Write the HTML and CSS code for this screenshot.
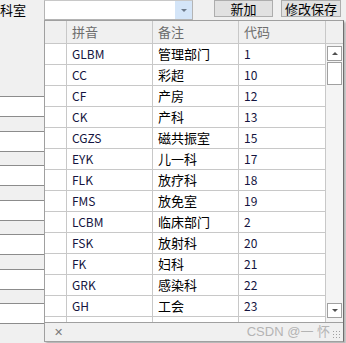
FILE: index.html
```html
<!DOCTYPE html>
<html lang="zh">
<head>
  <meta charset="UTF-8">
  <title>科室</title>
  <link rel="stylesheet" href="styles.css">
</head>
<body>

  <div class="toolbar">
    <span class="label">科室</span>
    <div class="combo">
      <span class="combo-btn"><span class="tri-down"></span></span>
    </div>
    <button class="btn btn-add">新加</button>
    <button class="btn btn-save">修改保存</button>
  </div>

  <div class="fields">
    <div class="field"></div>
    <div class="field"></div>
    <div class="field"></div>
    <div class="field"></div>
    <div class="field"></div>
    <div class="field"></div>
    <div class="field"></div>
  </div>

  <!-- dropdown grid -->
  <div class="popup">
    <div class="head">
      <div class="rh"></div>
      <div class="hc">拼音</div>
      <div class="hc">备注</div>
      <div class="hc">代码</div>
      <div class="hs"></div>
    </div>
    <div class="body">
      <div class="rows" id="rows"></div>
      <div class="scroll">
        <div class="sb-btn"><span class="tri-up"></span></div>
        <div class="thumb"></div>
        <div class="track"></div>
        <div class="sb-btn"><span class="tri-down dark"></span></div>
      </div>
    </div>
    <div class="foot">
      <span class="close">&#x2715;</span>
      <span class="mark">CSDN @一 怀</span>
      <span class="grip"></span>
    </div>
  </div>

  <script>
    const data = [
      ['GLBM', '管理部门', '1'], ['CC', '彩超', '10'], ['CF', '产房', '12'],
      ['CK', '产科', '13'], ['CGZS', '磁共振室', '15'], ['EYK', '儿一科', '17'],
      ['FLK', '放疗科', '18'], ['FMS', '放免室', '19'], ['LCBM', '临床部门', '2'],
      ['FSK', '放射科', '20'], ['FK', '妇科', '21'], ['GRK', '感染科', '22'],
      ['GH', '工会', '23'], ['', '', '']
    ];
    document.getElementById('rows').innerHTML = data.map(r =>
      `<div class="row"><div class="rh"></div><div class="c lat">${r[0]}</div><div class="c">${r[1]}</div><div class="c lat">${r[2]}</div></div>`
    ).join('');
  </script>

</body>
</html>
```

FILE: styles.css
```css
* { margin: 0; padding: 0; box-sizing: border-box; }
html, body {
  width: 346px;
  height: 343px;
  overflow: hidden;
}
body {
  font-family: "Noto Sans CJK SC", "Noto Sans", sans-serif;
  font-size: 13px;
  background: #f0f0f0;
  color: #000;
  position: relative;
}
.toolbar {
  display: flex;
  align-items: flex-start;
  height: 20px;
}
.label {
  width: 44px;
  line-height: 18px;
  padding-top: 1px;
}
.combo {
  width: 149px;
  height: 20px;
  background: white;
  border: 1px solid #b4b4b4;
  border-top-color: #c8c8c8;
  display: flex;
  justify-content: flex-end;
}
.combo-btn {
  width: 17px;
  height: 18px;
  background: #d4e5f8;
  display: flex;
  align-items: center;
  justify-content: center;
}
.tri-down {
  width: 0;
  height: 0;
  border-left: 3px solid transparent;
  border-right: 3px solid transparent;
  border-top: 3px solid #6d7a8a;
}
.tri-down.dark { border-top-color: #505050; }
.tri-up {
  width: 0;
  height: 0;
  border-left: 3px solid transparent;
  border-right: 3px solid transparent;
  border-bottom: 3px solid #505050;
}
.btn {
  height: 17px;
  background: #e1e1e1;
  border: 1px solid #adadad;
  font-family: inherit;
  font-size: 13px;
  line-height: 14px;
  color: #000;
}
.btn-add { width: 59px; margin-left: 21px; }
.btn-save { width: 60px; margin-left: 8px; }

.fields {
  margin-top: 76px;
  display: flex;
  flex-direction: column;
  gap: 13.5px;
}
.field {
  width: 60px;
  height: 21px;
  background: white;
  border-top: 1px solid #8c8c8c;
  border-bottom: 1px solid #8c8c8c;
}

.popup {
  position: absolute;
  left: 44px;
  top: 20px;
  width: 300px;
  height: 322px;
  background: white;
  border: 1px solid #a0a0a0;
  border-right-color: #6e6e6e;
  box-shadow: 2px 2px 2px rgba(0, 0, 0, 0.25);
  display: flex;
  flex-direction: column;
}
.head {
  display: flex;
  height: 23px;
  background: #f0f0f0;
  border-bottom: 1px solid #c8c8c8;
}
.rh {
  width: 22px;
  flex: none;
  border-right: 1px solid #c8c8c8;
}
.hc {
  width: 86px;
  padding-left: 5px;
  line-height: 22px;
  color: #6d6d6d;
  border-right: 1px solid #c8c8c8;
}
.hc:nth-child(4) { width: 87px; }
.hs { width: 17px; }
.body {
  display: flex;
  height: 278px;
  overflow: hidden;
}
.rows {
  width: 281px;
  overflow: hidden;
}
.row {
  display: flex;
  height: 21px;
  border-bottom: 1px solid #c8c8c8;
}
.row .rh { background: white; }
.c {
  width: 86px;
  padding-left: 5px;
  line-height: 20px;
  border-right: 1px solid #c8c8c8;
  white-space: nowrap;
}
.c:nth-child(4) { width: 87px; }
.lat {
  font-size: 12px;
  color: #141440;
}
.scroll {
  width: 17px;
  background: #f4f4f4;
  display: flex;
  flex-direction: column;
  align-items: center;
  padding: 2px 0 4px;
}
.sb-btn {
  width: 15px;
  height: 15px;
  background: white;
  border: 1px solid #a0a0a0;
  display: flex;
  align-items: center;
  justify-content: center;
}
.thumb {
  width: 15px;
  height: 23px;
  margin-top: 1px;
  background: white;
  border: 1px solid #a0a0a0;
}
.track { flex: 1; }
.foot {
  flex: 1;
  background: #f0f0f0;
  border-top: 1px solid #a0a0a0;
  display: flex;
  align-items: center;
  position: relative;
}
.close {
  margin-left: 9px;
  font-size: 11px;
  color: #7a7a7a;
  font-family: "DejaVu Sans", sans-serif;
}
.mark {
  margin-left: auto;
  margin-right: 13px;
  font-family: "Liberation Sans", "Noto Sans CJK SC", sans-serif;
  font-size: 13px;
  line-height: 16px;
  color: #b4b4b4;
}
.grip {
  position: absolute;
  right: 2px;
  bottom: 2px;
  width: 9px;
  height: 9px;
  background: radial-gradient(circle, #a0a0a0 0.8px, transparent 1px) 0 0 / 3px 3px;
}
```
